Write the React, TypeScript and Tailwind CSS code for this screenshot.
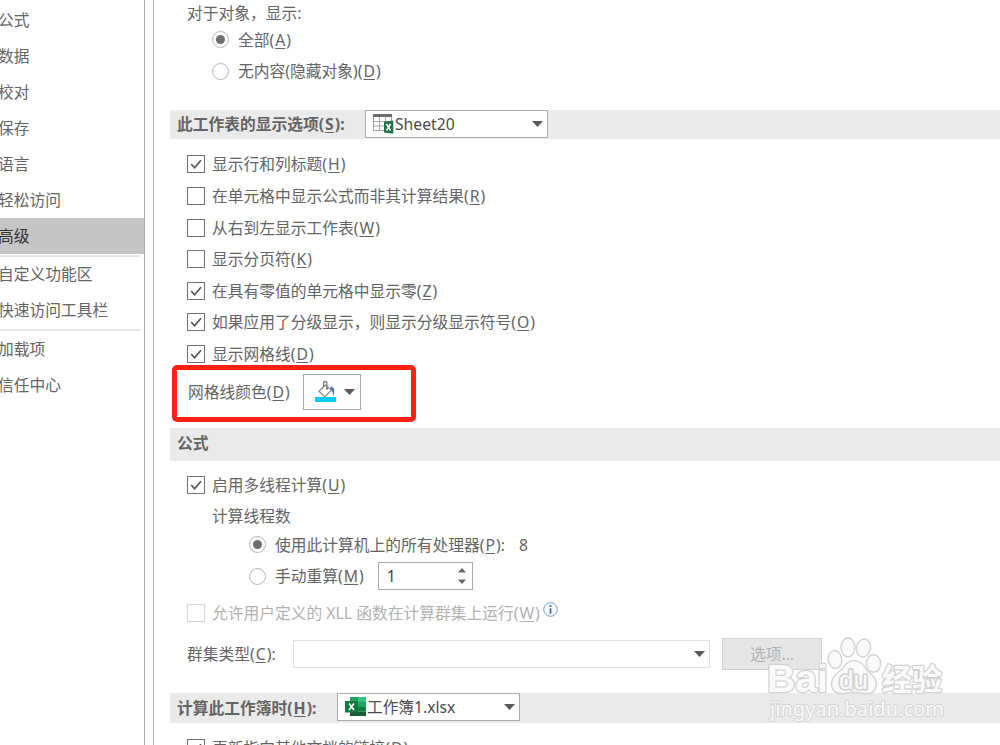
import React from 'react';
import clsx from 'clsx';

interface OptionProps {
  label: string;
  hotkey: string;
  checked?: boolean;
  disabled?: boolean;
  suffix?: string;
}

const NAV_GROUPS: string[][] = [
  ['公式', '数据', '校对', '保存', '语言', '轻松访问', '高级'],
  ['自定义功能区', '快速访问工具栏'],
  ['加载项', '信任中心']
];

const SHEET_OPTIONS: OptionProps[] = [
  { label: '显示行和列标题', hotkey: 'H', checked: true },
  { label: '在单元格中显示公式而非其计算结果', hotkey: 'R' },
  { label: '从右到左显示工作表', hotkey: 'W' },
  { label: '显示分页符', hotkey: 'K' },
  { label: '在具有零值的单元格中显示零', hotkey: 'Z', checked: true },
  { label: '如果应用了分级显示，则显示分级显示符号', hotkey: 'O', checked: true },
  { label: '显示网格线', hotkey: 'D', checked: true }
];

function Label({ label, hotkey, suffix = '' }: OptionProps) {
  return (
    <span className="whitespace-nowrap">
      {label}(<span className="px-[1px] underline decoration-1 underline-offset-2">{hotkey}</span>){suffix}
    </span>
  );
}

function Checkbox({ label, hotkey, checked, disabled }: OptionProps) {
  return (
    <div className={clsx('flex h-[31.6px] items-center pl-[17px]', disabled && 'text-[#b1b1b1]')}>
      <span
        className={clsx(
          'mr-[7px] flex h-[18px] w-[18px] shrink-0 items-center justify-center border bg-white',
          disabled ? 'border-[#d4d4d4]' : 'border-[#707070]'
        )}
      >
        {checked && (
          <svg viewBox="0 0 16 16" className="h-4 w-4" fill="none" stroke="#555" strokeWidth="1.7">
            <path d="M3.2 8 6.6 11.8 13 4.2" />
          </svg>
        )}
      </span>
      <Label label={label} hotkey={hotkey} />
    </div>
  );
}

function Radio({ label, hotkey, checked, suffix }: OptionProps) {
  return (
    <div className="flex h-[31.6px] items-center">
      <span className="mr-[9px] flex h-[17px] w-[17px] shrink-0 items-center justify-center rounded-full border border-[#b4b4b4] bg-white">
        {checked && <span className="h-[9px] w-[9px] rounded-full bg-[#6e6e6e]" />}
      </span>
      <Label label={label} hotkey={hotkey} suffix={suffix} />
    </div>
  );
}

function Caret({ className }: { className?: string }) {
  return (
    <svg viewBox="0 0 11 6" className={clsx('h-[6px] w-[11px] shrink-0', className)} fill="#5a5a5a">
      <path d="M0 0h11L5.5 6z" />
    </svg>
  );
}

function SheetIcon() {
  return (
    <svg viewBox="0 0 21 20" className="h-5 w-[21px] shrink-0">
      <path d="M.5.5h18v16H.5z" fill="#fff" stroke="#a0a0a0" />
      <path d="M0 0h19v3H0z" fill="#6b6b6b" />
      <path d="M.5 7.5h18M.5 12h18M6.5 3v13.5M12.5 3v13.5" stroke="#a8a8a8" fill="none" />
      <path d="M11 7.8 20.3 6.6v13.2L11 18.6z" fill="#217346" />
      <path d="m13.5 10 4 6.5m0-6.5-4 6.5" stroke="#fff" strokeWidth="1.5" />
    </svg>
  );
}

function ExcelIcon() {
  return (
    <svg viewBox="0 0 21 19" className="h-[19px] w-[21px] shrink-0">
      <path d="M5 0h8v10H5z" fill="#21a366" />
      <path d="M13 0h8v5h-8z" fill="#33c481" />
      <path d="M13 5h8v5h-8z" fill="#21a366" />
      <path d="M5 10h8v9H5z" fill="#185c37" />
      <path d="M13 10h8v4.5h-8z" fill="#107c41" />
      <path d="M13 14.5h8V19h-8z" fill="#185c37" />
      <path d="M0 4h13v11.5H0z" fill="#0b7a3e" />
      <path d="m4 6.5 5 6.5M9 6.5 4 13" stroke="#fff" strokeWidth="1.7" />
    </svg>
  );
}

function FillIcon() {
  return (
    <svg viewBox="0 0 22 22" className="h-[22px] w-[22px] shrink-0" fill="none">
      <path d="M15.500 5.500c3.700.4 5 4 2.700 9.700 0-3-.8-5.200-2.700-6.900z" fill="#4472b8" />
      <path d="M10.3 4 4 10.3l5.8 5.6 6.6-6.8z" fill="#fff" stroke="#858585" strokeWidth="1.2" />
      <path d="M8.500 6V1.400c0-1 3.400-1 3.400 0v5.200" stroke="#777" strokeWidth="1.200" />
      <circle cx="12" cy="7.600" r="1.100" fill="#666" />
      <path d="M0 16h21v5H0z" fill="#00cdff" />
    </svg>
  );
}

function Select({ icon, value }: { icon: React.ReactNode; value: string }) {
  return (
    <div className="flex h-7 w-[183px] items-center border border-[#ababab] bg-white pl-[7px] pr-1 font-normal text-[#4c4c4c]">
      {icon}
      <span className="ml-[1px] text-[15.7px]">{value}</span>
      <Caret className="ml-auto" />
    </div>
  );
}

function Watermark() {
  return (
    <svg
      viewBox="0 0 190 95"
      className="absolute left-[760px] top-[630px] h-[95px] w-[190px]"
      fill="#fafafa"
      stroke="#d3d3d3"
      strokeWidth="1.4"
      strokeLinejoin="round"
    >
      <g fontFamily="'Liberation Sans', sans-serif" fontWeight="bold" strokeWidth="2.6" style={{ paintOrder: 'stroke' }}>
        <text x="7" y="62" fontSize="39" textLength="61" lengthAdjust="spacingAndGlyphs">Bai</text>
        <text x="122" y="60" fontSize="30" fontFamily="'Noto Sans CJK SC', sans-serif">经验</text>
      </g>
      <ellipse cx="75" cy="29.5" rx="6.8" ry="9" transform="rotate(-8 75 29.5)" />
      <ellipse cx="88" cy="17.5" rx="6.9" ry="9.5" />
      <ellipse cx="103.500" cy="18" rx="7" ry="9" transform="rotate(12 103.500 18)" />
      <ellipse cx="113.500" cy="33.500" rx="7.200" ry="8.800" />
      <path d="M94 30.500c6 0 9 4 12 8.500 4 5 10.500 8 10.500 15 0 8-6.500 10.500-12.500 9.500-7-1.500-13-1.500-20 0-7 1-12.500-2-12.500-10 0-7 6-10 10.500-14.500 3-4 6-8.500 12-8.500z" />
      <text x="79" y="59" fontSize="25" fontFamily="'Liberation Sans', sans-serif" strokeWidth="3.400" textLength="29" lengthAdjust="spacingAndGlyphs" style={{ paintOrder: 'stroke' }}>du</text>
      <text x="10" y="86" fontSize="20" fontFamily="'Noto Sans', sans-serif" strokeWidth="1.800" textLength="174" style={{ paintOrder: 'stroke' }}>jingyan.baidu.com</text>
    </svg>
  );
}

export default function App() {
  return (
    <div className="relative flex h-[745px] w-[1000px] overflow-hidden bg-white font-['Noto_Sans','Noto_Sans_CJK_SC',sans-serif] text-[15.75px] leading-5 text-[#646464]">
      {/* Category list */}
      <nav className="w-[145px] shrink-0 border-r border-[#ababab] pt-[2.8px]">
        {NAV_GROUPS.map((group, i) => (
          <div key={group[0]}>
            {i > 0 && <div className={clsx('mr-1 bg-[#e4e4e4]', i === 1 ? 'mt-[1px] h-[2px]' : 'h-[2.5px]')} />}
            {group.map((item) => (
              <div
                key={item}
                className={clsx('flex h-[35.9px] items-center whitespace-nowrap pb-[1px]', item === '高级' && 'bg-[#c5c5c5] text-[#333]')}
              >
                <span className="-ml-[2px]">{item}</span>
              </div>
            ))}
          </div>
        ))}
      </nav>

      <main className="ml-2 flex-1 border-l border-[#b5b5b5] pl-4">
        <div className="pl-[17px] pt-[3px]">对于对象，显示:</div>
        <div className="pl-[42px] pt-[1px]">
          <Radio label="全部" hotkey="A" checked />
          <Radio label="无内容(隐藏对象)" hotkey="D" />
        </div>

        <div className="mt-[22.8px] flex h-[29px] bg-[#eaeaea] pl-[7px] font-bold">
          <div className="flex w-[188px] items-center"><Label label="此工作表的显示选项" hotkey="S" suffix=":" /></div>
          <Select icon={<SheetIcon />} value="Sheet20" />
        </div>

        <div className="mt-[9.6px]">
          {SHEET_OPTIONS.map((option) => (
            <Checkbox key={option.hotkey + option.label} {...option} />
          ))}
        </div>

        {/* Gridline colour, highlighted */}
        <div className="-mt-[5px] ml-[2px] flex h-[57px] w-[244px] items-center rounded-[5px] border-[5px] border-[#ff2214] pb-[3px] pl-[11px]">
          <Label label="网格线颜色" hotkey="D" />
          <div className="ml-auto mr-[50px] flex h-9 w-[58px] shrink-0 items-center border border-[#ababab] bg-[#fdfdfd] pl-[11px]">
            <FillIcon />
            <Caret className="ml-[7px]" />
          </div>
        </div>

        <div className="mt-[6px] h-[33px] bg-[#eaeaea] pl-[7px] pt-[5px] font-bold">公式</div>

        <div className="pt-[8.5px]">
          <Checkbox label="启用多线程计算" hotkey="U" checked />
          <div className="flex h-[28px] items-center pl-[42px] pt-[2px]">计算线程数</div>
          <div className="flex items-center pl-[79px]">
            <Radio label="使用此计算机上的所有处理器" hotkey="P" checked suffix=":" />
            <span className="ml-[14px]">8</span>
          </div>
          <div className="flex items-center pl-[79px]">
            <Radio label="手动重算" hotkey="M" />
            <div className="ml-[14px] flex h-7 w-[95px] items-center justify-between border border-[#ababab] pl-2 pr-[6px] text-[#444]">
              <span>1</span>
              <svg viewBox="0 0 8 16" className="h-4 w-2" fill="#666">
                <path d="M0 4.500h8L4 0zM0 11.500h8L4 16z" />
              </svg>
            </div>
          </div>
          <div className="mt-[4.8px] flex">
            <Checkbox label="允许用户定义的 XLL 函数在计算群集上运行" hotkey="W" disabled />
            <svg viewBox="0 0 15 15" className="ml-[3px] mt-[5px] h-[15px] w-[15px]" fill="none" stroke="#7d9fd3">
              <circle cx="7.500" cy="7.500" r="6.800" fill="#f7faff" />
              <path d="M7.500 3v2M7.500 6.200v5.500" stroke="#315ea5" strokeWidth="1.600" />
            </svg>
          </div>
        </div>

        <div className="mt-[9.5px] flex h-8 items-center pl-[17px]">
          <div className="w-[106px]"><Label label="群集类型" hotkey="C" suffix=":" /></div>
          <div className="flex h-7 w-[417px] items-center justify-end border border-[#e1e1e1] pr-[4px]"><Caret /></div>
          <div className="ml-[12px] flex h-8 w-[100px] items-center justify-center border border-[#d2d2d2] bg-[#e5e5e5] text-[#b1b1b1]">
            选项...
          </div>
        </div>

        <div className="mt-[23px] flex h-[30px] bg-[#eaeaea] pl-[7px] font-bold">
          <div className="flex w-[160px] items-center"><Label label="计算此工作簿时" hotkey="H" suffix=":" /></div>
          <Select icon={<ExcelIcon />} value="工作簿1.xlsx" />
        </div>
        <div className="mt-[9px]">
          <Checkbox label="更新指向其他文档的链接" hotkey="D" checked />
        </div>
      </main>
      <Watermark />
    </div>
  );
}
